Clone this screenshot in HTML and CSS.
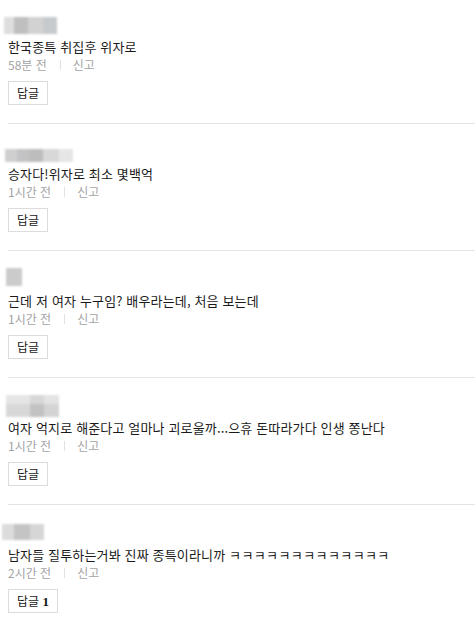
FILE: index.html
```html
<!DOCTYPE html>
<html lang="ko">
<head>
    <meta charset="UTF-8">
    <meta name="viewport" content="width=device-width, initial-scale=1.0">
    <title>댓글</title>
    <link rel="stylesheet" href="styles.css">
</head>
<body>
    <ul class="comments">
        <li class="comment">
            <div class="nick"><span class="blur n1"></span></div>
            <p class="text">한국종특 취집후 위자로</p>
            <div class="meta"><span>58분 전</span><span class="sep"></span><span>신고</span></div>
            <button class="reply">답글</button>
        </li>
        <li class="comment">
            <div class="nick"><span class="blur n2"></span></div>
            <p class="text">승자다!위자로 최소 몇백억</p>
            <div class="meta"><span>1시간 전</span><span class="sep"></span><span>신고</span></div>
            <button class="reply">답글</button>
        </li>
        <li class="comment">
            <div class="nick"><span class="blur n3"></span></div>
            <p class="text">근데 저 여자 누구임? 배우라는데, 처음 보는데</p>
            <div class="meta"><span>1시간 전</span><span class="sep"></span><span>신고</span></div>
            <button class="reply">답글</button>
        </li>
        <li class="comment">
            <div class="nick"><span class="blur n4"></span></div>
            <p class="text">여자 억지로 해준다고 얼마나 괴로울까...으휴 돈따라가다 인생 쫑난다</p>
            <div class="meta"><span>1시간 전</span><span class="sep"></span><span>신고</span></div>
            <button class="reply">답글</button>
        </li>
        <li class="comment">
            <div class="nick"><span class="blur n5"></span></div>
            <p class="text">남자들 질투하는거봐 진짜 종특이라니까 <span class="kk">ㅋㅋㅋㅋㅋㅋㅋㅋㅋㅋㅋㅋㅋ</span></p>
            <div class="meta"><span>2시간 전</span><span class="sep"></span><span>신고</span></div>
            <button class="reply">답글 <b class="count">1</b></button>
        </li>
    </ul>
</body>
</html>
```

FILE: styles.css
```css
body {
    margin: 0;
    background: #fff;
    font-family: "Noto Sans CJK KR", "Liberation Sans", sans-serif;
    font-size: 12px;
    color: #1a1a1a;
    overflow: hidden;
}

.comments {
    list-style: none;
    margin: 0;
    padding: 0;
}

.comment {
    margin-left: 8px;
    padding: 24px 0 18px;
    border-bottom: 1px solid #e4e4e4;
}

.comment:first-child {
    padding-top: 21px;
}

/* blurred nicknames */
.nick {
    height: 17px;
    display: flex;
    align-items: flex-end;
}

.blur {
    display: block;
    filter: blur(1px);
}

.n1 {
    width: 53px;
    height: 17px;
    margin: 0 0 4px -4px;
    background: linear-gradient(to right, #dedede 0 10px, #bfbfbf 10px 24px, #d2d2d2 24px 39px, #c7cacd 39px);
}

.n2 {
    width: 68px;
    height: 13px;
    margin: 0 0 3px -3px;
    background: linear-gradient(to right, #cfcfcf 0 12px, #c3c3c5 12px 24px, #bdbdbd 24px 38px, #d8d8d8 38px 54px, #e6e6e6 54px);
}

.n3 {
    width: 16px;
    height: 18px;
    margin: 0 0 6px -2px;
    background: #cbcbcb;
}

.n4 {
    width: 53px;
    height: 22px;
    margin: 0 0 2px -2px;
    background:
        linear-gradient(to bottom, rgba(255, 255, 255, 0.35) 0 9px, transparent 9px),
        linear-gradient(to right, #d8d8d8 0 24px, #c2c2c2 24px 38px, #d4d4d4 38px);
}

.n5 {
    width: 42px;
    height: 16px;
    margin: 0 0 6px -6px;
    background: linear-gradient(to right, #dcdcdc 0 12px, #c4c4c4 12px 28px, #d6d6d6 28px);
}

.text {
    margin: 0;
    font-size: 13px;
    line-height: 18px;
    letter-spacing: 0.15px;
    white-space: nowrap;
}

.kk {
    letter-spacing: 0.4px;
}

.meta {
    display: flex;
    align-items: center;
    line-height: 18px;
    color: #a4a4a4;
}

.sep {
    width: 1px;
    height: 10px;
    margin: 0 12px 0 13px;
    background: #e2e2e2;
}

.reply {
    display: block;
    margin-top: 7px;
    height: 24px;
    padding: 0 8px;
    border: 1px solid #dcdcdc;
    background: #fff;
    font-family: inherit;
    font-size: 12px;
    color: #1a1a1a;
    line-height: 22px;
}

.count {
    font-family: "Liberation Serif", serif;
    font-size: 13px;
    font-weight: bold;
    color: #111;
}
```
